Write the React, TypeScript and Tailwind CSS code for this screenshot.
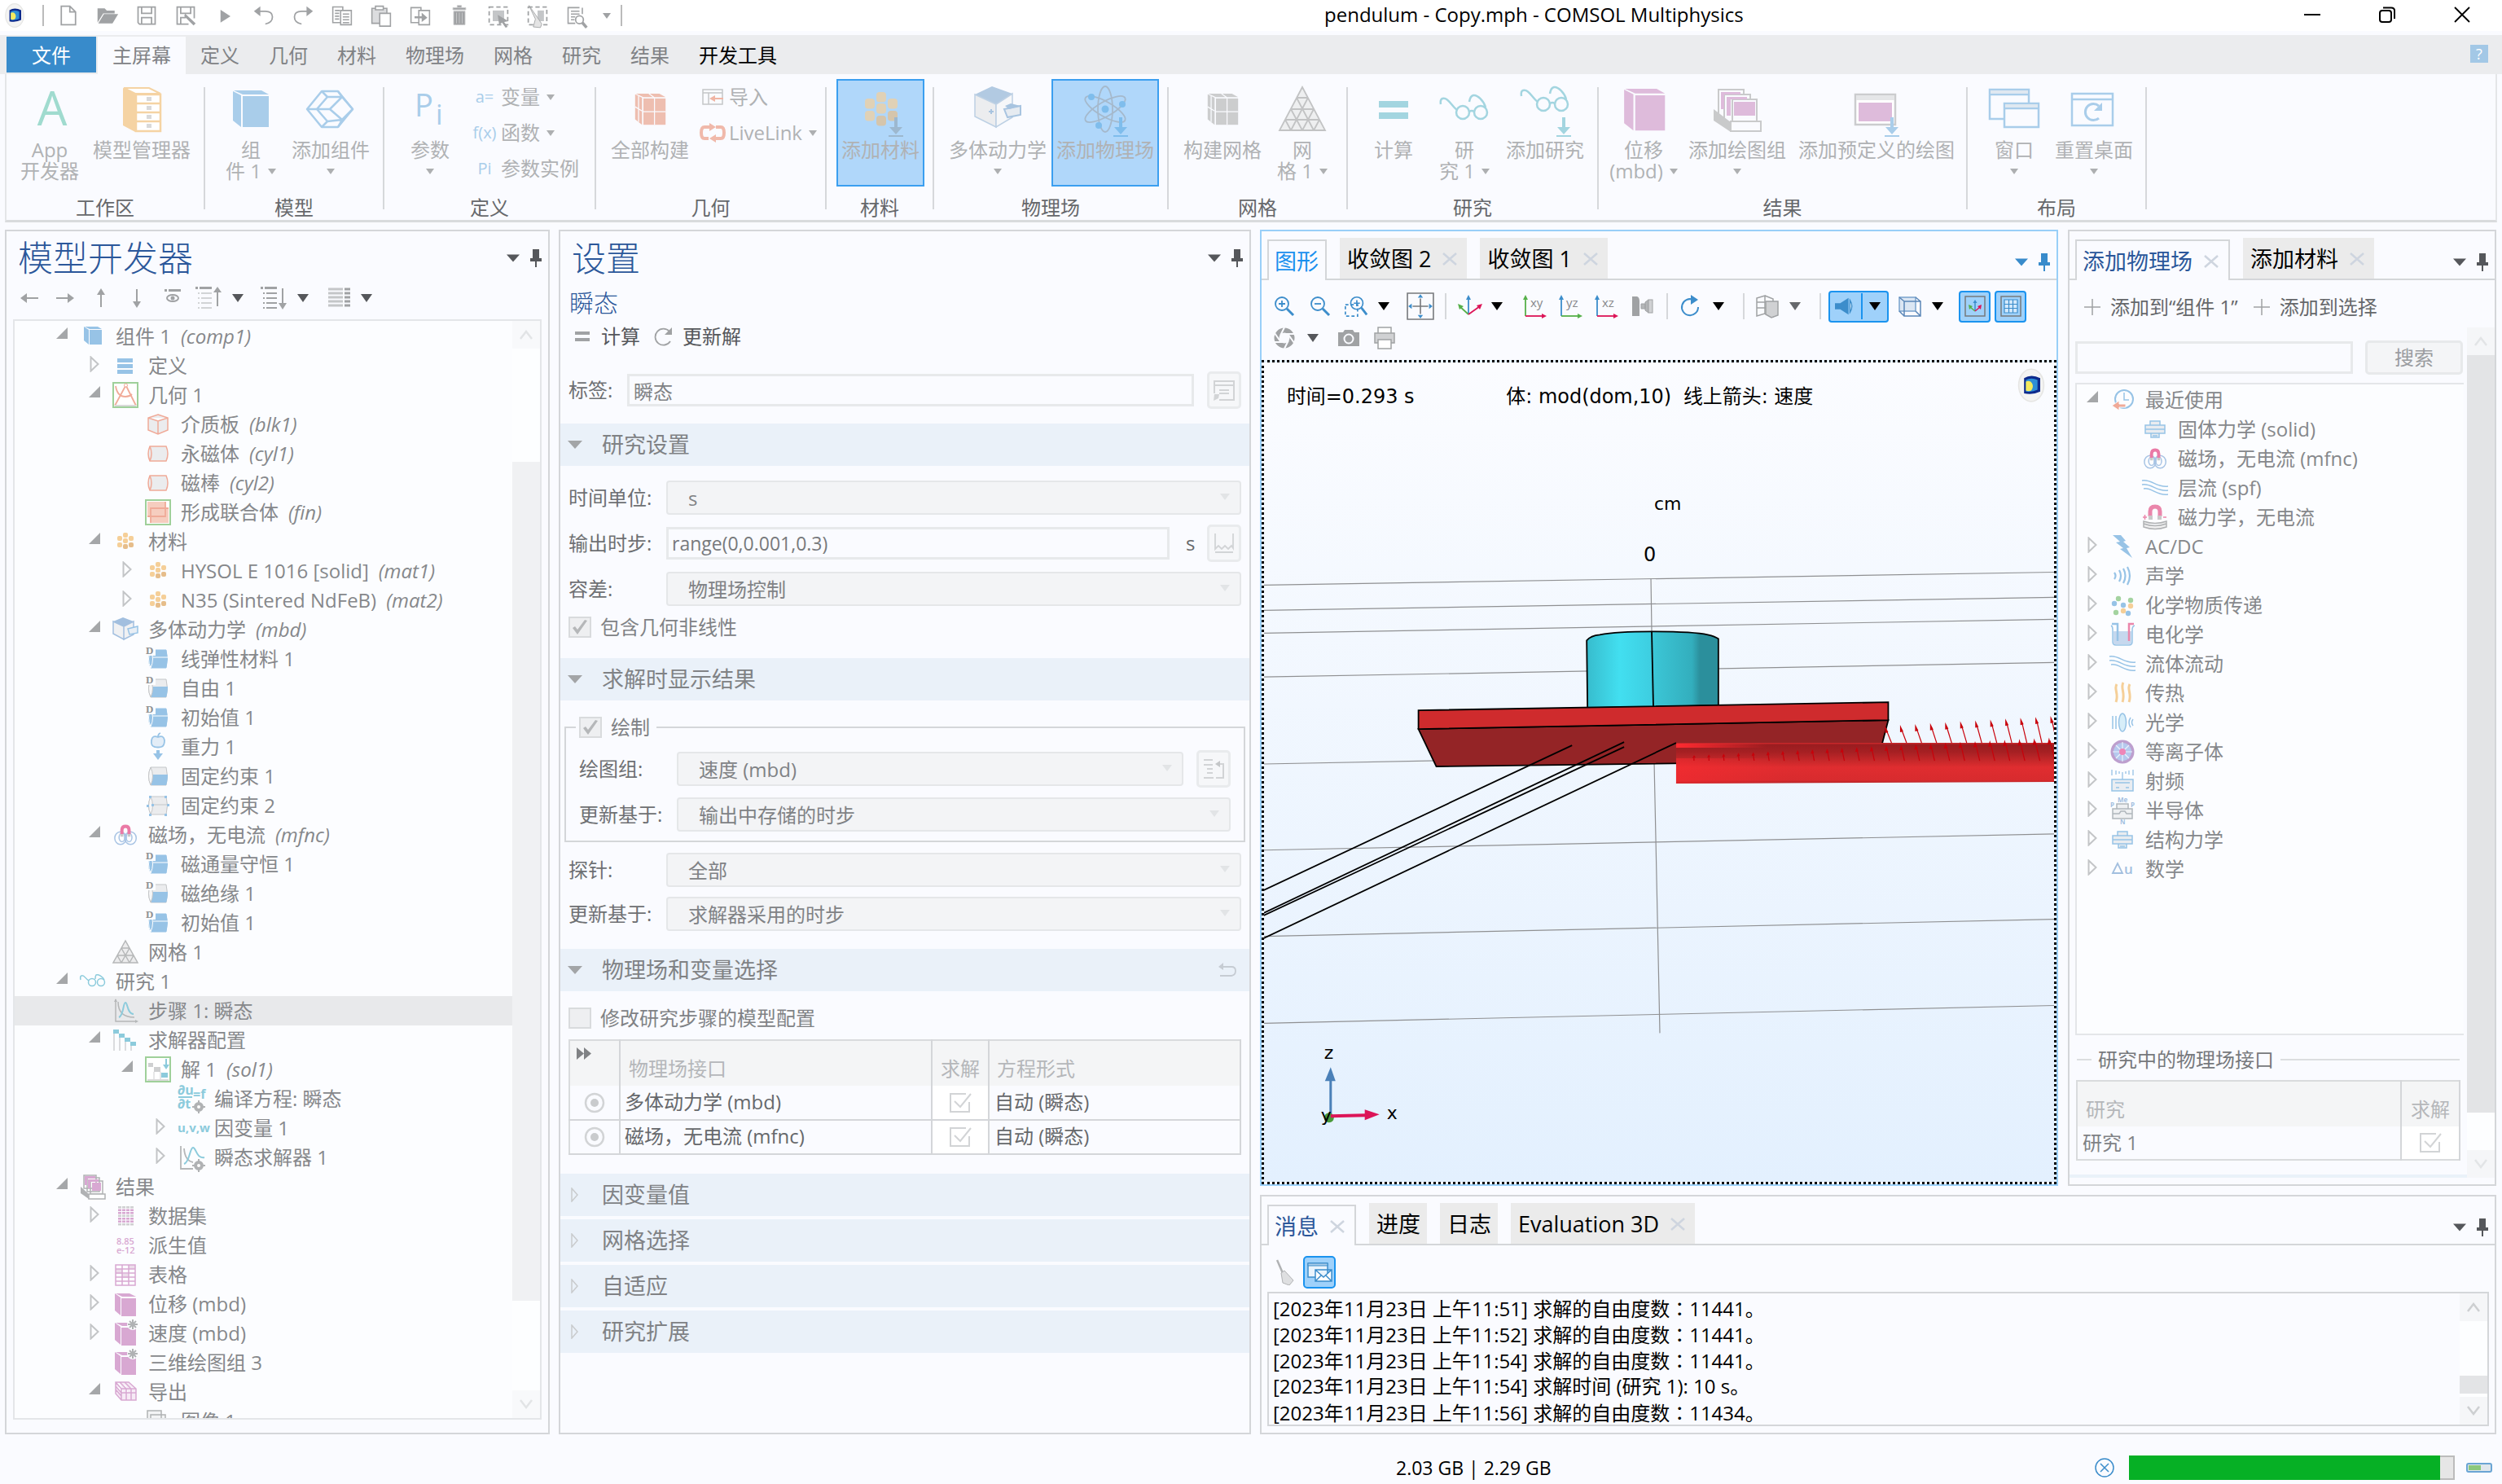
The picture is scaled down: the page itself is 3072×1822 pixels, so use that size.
import React from "react";

type Kids = { children?: React.ReactNode };

const B = "#97c3e6";
const G = "#a0a2a4";
const LG = "#c4c6c8";
const PINK = "#d8a8d2";
const CY = "#8ccbdc";
const OR = "#f5cf98";
const RD = "#f0aa98";

/* ---------- generic pieces ---------- */

function Svg({ s = "size-8", vb = "0 0 32 32", children }: Kids & { s?: string; vb?: string }) {
  return (
    <svg className={`${s} block shrink-0`} viewBox={vb} fill="none" aria-hidden="true">
      {children}
    </svg>
  );
}

function Caret({ color = "#000" }: { color?: string }) {
  return (
    <Svg s="w-[14px] h-[10px]" vb="0 0 14 10">
      <path d="M0 0H14L7 10Z" fill={color} />
    </Svg>
  );
}

function PanelTools({ color = "#55575b" }: { color?: string }) {
  return (
    <div className="flex items-center gap-[13px]">
      <button type="button" aria-label="菜单">
        <Svg s="w-[16px] h-[10px]" vb="0 0 16 10">
          <path d="M0 0.500H16L8 9.500Z" fill={color} />
        </Svg>
      </button>
      <button type="button" aria-label="固定">
        <Svg s="w-[14px] h-[22px]" vb="0 0 14 22">
          <path d="M3 0H11V11H14V15H8V22H6V15H0V11H3Z" fill={color} />
        </Svg>
      </button>
    </div>
  );
}

function CloseX() {
  return (
    <Svg s="size-[18px]" vb="0 0 18 18">
      <path d="M1 2L17 16M17 2L1 16" stroke="#ced5df" strokeWidth="2.500" />
    </Svg>
  );
}

function Tab({ label, active, close, color = "text-[#2b579a]" }: { label: string; active?: boolean; close?: boolean; color?: string }) {
  const base = "flex h-[50px] items-center gap-[14px] pt-[2px] text-[27px] leading-[48px] whitespace-nowrap";
  const look = active ? `relative -mb-[2px] border-2 border-b-0 border-[#d4d6d9] bg-[#fafbff] pl-[7px] ${color}` : "bg-[#ebebeb] pl-[9px] text-black";
  return (
    <div className={`${base} ${look} ${close ? "pr-3" : "pr-[8px]"}`}>
      <button type="button" role="tab" aria-selected={!!active} className="whitespace-nowrap">
        {label}
      </button>
      {close && (
        <button type="button" aria-label="关闭">
          <CloseX />
        </button>
      )}
    </div>
  );
}

function TabBar({ children, pin }: Kids & { pin?: string }) {
  return (
    <div className="flex h-[60px] shrink-0 items-end justify-between border-b-2 border-[#d4d6d9] pl-[7px] pr-2">
      <div role="tablist" className="flex items-end gap-4">{children}</div>
      <div className="flex h-10 items-center">
        <PanelTools color={pin} />
      </div>
    </div>
  );
}

function Panel({ children, border = "border-[#d4d6d9]" }: Kids & { border?: string }) {
  return <section className={`flex min-h-0 min-w-0 flex-col border-2 bg-[#fafbff] ${border}`}>{children}</section>;
}

function Chevron({ up, color = "#e2e4e6" }: { up?: boolean; color?: string }) {
  return (
    <Svg s="w-[16px] h-[12px]" vb="0 0 16 12">
      <path d={up ? "M1 11L8 2L15 11" : "M1 1L8 10L15 1"} stroke={color} strokeWidth="2.500" />
    </Svg>
  );
}

/* ---------- ribbon icons (60 × 60) ---------- */

function Block({ c, split }: { c: string; split?: boolean }) {
  return (
    <>
      <path d="M8 8L18 13V52L8 44Z" fill={c} />
      <path d="M9 7H43L52 12H20Z" fill={c} />
      <path d="M20 14H52V52H20Z" fill={c} />
      {split && <path d="M20 33H52M36 14V52M8 26L18 32M13 10V48M28 7L36 13" stroke="#fafbff" strokeWidth="1.500" />}
    </>
  );
}

function AddArrow({ c }: { c: string }) {
  return <path d="M47 40H51V52H57L49 61L41 52H47ZM40 62H58V64H40Z" fill={c} />;
}

function Glasses({ c }: { c: string }) {
  return (
    <g stroke={c} strokeWidth="2.500">
      <circle cx="28" cy="34" r="8" />
      <circle cx="50" cy="34" r="8" />
      <path d="M21 31C14 26 10 15 3 17Q0 18 1 24M36 33Q39 31 42 33M56 28C54 20 46 12 41 13Q37 14 36 21" />
    </g>
  );
}

const blobs: [number, number, string][] = [
  [11, 17, OR], [11, 32, OR], [25, 9, OR], [25, 23, OR], [25, 38, "#e6bd8a"], [39, 17, OR], [39, 32, "#e6bd8a"],
];

const ribbonIcon: Record<string, React.ReactNode> = {
  app: <text x="33" y="50" textAnchor="middle" fontSize="58" fill="#a0dbcf">A</text>,
  cabinet: (
    <>
      <path d="M7 4L22 11V58L7 50Z" fill="#f5d3a3" />
      <path d="M8 4H39L53 11H22Z" fill="#fff" stroke="#f5d3a3" strokeWidth="2" />
      <path d="M23 12H53V57H23ZM23 23H53M23 34H53M23 45H53" fill="#fff" stroke="#f5d3a3" strokeWidth="2.500" />
      <path d="M36 15H42V20H36ZM36 26H42V31H36ZM36 37H42V42H36ZM36 48H42V53H36Z" fill="#d9d9d9" />
    </>
  ),
  comp: <Block c="#a9cdea" />,
  addcomp: (
    <g stroke="#a9cdea" strokeWidth="2.500" strokeLinejoin="round">
      <path d="M1 30L19 8H39L57 30L39 52H19Z" />
      <path d="M19 8L26 15H44L57 30L44 43L26 45L19 52M26 15L13 30L26 45M1 30H13M44 15L29 30L44 43M39 8L44 15M13 30H29M39 52L44 43" />
    </g>
  ),
  params: (
    <g fill="#a9cdea">
      <text x="11" y="39" fontSize="38">P</text>
      <text x="37" y="49" fontSize="34">i</text>
    </g>
  ),
  build: <g transform="translate(5 5) scale(0.85)"><Block c="#eebeb0" split /></g>,
  material: (
    <>
      {blobs.map(([x, y, c], i) => (
        <rect key={i} x={x} y={y} width="12" height="12.500" rx="4" fill={c} opacity="0.7" />
      ))}
      <AddArrow c="#9db8cf" />
    </>
  ),
  mbd: (
    <>
      <path d="M2 12L23 2L48 11L28 24Z" fill="#b2cae2" />
      <path d="M2 12L28 24V52L2 39Z" fill="#ecedef" stroke="#bdd0e4" strokeWidth="1.500" />
      <path d="M28 24L48 11V40L28 52Z" fill="#f6f7f9" stroke="#bdd0e4" strokeWidth="1.500" />
      <path d="M38 30L58 26V37L42 40Z" fill="#e6ebf1" stroke="#a8c4e0" strokeWidth="2" />
      <path d="M39 26L46 23L58 26L44 30Z" fill="#a8c4e0" />
      <path d="M22 30V36M19 33H25" stroke="#a8c4e0" strokeWidth="2" />
    </>
  ),
  physics: (
    <>
      <g stroke="#a5b9cc" strokeWidth="1.800">
        <ellipse cx="30" cy="30" rx="9" ry="28" />
        <ellipse cx="30" cy="30" rx="9" ry="28" transform="rotate(60 30 30)" />
        <ellipse cx="30" cy="30" rx="9" ry="28" transform="rotate(-60 30 30)" />
      </g>
      <g fill="#7fbdec">
        <circle cx="30" cy="30" r="4.500" />
        <circle cx="13" cy="15" r="4" />
        <circle cx="51" cy="24" r="4" />
        <circle cx="22" cy="50" r="4" />
      </g>
      <AddArrow c="#7fbdec" />
    </>
  ),
  meshbuild: <g transform="translate(5 5) scale(0.85)"><Block c="#cccdce" split /></g>,
  mesh: (
    <path
      d="M30 3L2 56H58ZM23 16H37M16 30H44M9 43H51M37 16L16 56M44 30L30 56M51 43L44 56M23 16L44 56M16 30L30 56M9 43L16 56"
      stroke="#c2c3c4" strokeWidth="1.800" fill="#eeeff0"
    />
  ),
  compute: <path d="M12 20H48V28H12ZM12 34H48V42H12Z" fill="#a3d5e0" />,
  study: <Glasses c="#a3d5e0" />,
  addstudy: (
    <>
      <g transform="translate(0 -10)"><Glasses c="#a3d5e0" /></g>
      <path d="M51 40H55V52H61L53 61L45 52H51ZM44 62H62V64H44Z" fill="#a3d5e0" />
    </>
  ),
  disp: <g transform="translate(-3 -3) scale(1.14)"><Block c="#debbdb" /></g>,
  addplot: (
    <>
      <g stroke="#c9cacb" strokeWidth="2" fill="#fafbff">
        <path d="M7 6H38V40H7Z" /><path d="M14 12H46V46H14Z" /><path d="M24 18H54V48H24Z" />
      </g>
      <path d="M10 9H34V12H14V30H10Z" fill="#debbdb" />
      <path d="M17 15H42V18H22V38H17Z" fill="#debbdb" />
      <path d="M26 21H52V38H26Z" fill="#debbdb" />
      <path d="M1 30L22 46V58L1 44Z" fill="#c9cacb" />
      <path d="M22 45H59V57H22Z" fill="#fafbff" stroke="#c9cacb" strokeWidth="2" />
    </>
  ),
  predef: (
    <>
      <path d="M4 12H53V49H4Z" fill="#fff" stroke="#cbccce" strokeWidth="2.500" />
      <path d="M5 13H52V19H5Z" fill="#e5e6e8" />
      <path d="M8 22H49V45H8Z" fill="#debbdb" />
      <AddArrow c="#a9cdea" />
    </>
  ),
  windows: (
    <g stroke="#a9cdea" strokeWidth="2.500">
      <path d="M0 6H48V42H0Z" fill="#fafbff" /><path d="M0 12H48" /><path d="M1 7H47V11H1Z" fill="#dfe8f1" stroke="none" />
      <path d="M18 23H60V52H18Z" fill="#fafbff" /><path d="M18 29H60" /><path d="M19 24H59V28H19Z" fill="#dfe8f1" stroke="none" />
    </g>
  ),
  reset: (
    <g stroke="#a9cdea" strokeWidth="2.500">
      <path d="M3 11H53V50H3ZM3 18H53" />
      <path d="M36 41A10 10 0 1 1 36 26" strokeWidth="3" />
      <path d="M40 22V32H30Z" fill="#a9cdea" stroke="none" />
    </g>
  ),
};

type RB = { icon: string; l1: string; l2?: string; drop?: boolean; w: string; on?: boolean };

function RibbonButton({ icon, l1, l2, drop, w, on }: RB) {
  return (
    <button
      type="button"
      className={`flex h-[132px] shrink-0 flex-col items-center text-[24px] leading-[26px] whitespace-nowrap text-[#b0b2b4] ${w} ${
        on ? "bg-[#b0d7fa] shadow-[inset_0_0_0_2px_#3b9ff0]" : ""
      }`}
    >
      <span className="flex h-[74px] items-center">
        <Svg s="size-[60px] overflow-visible" vb="0 0 60 60">{ribbonIcon[icon]}</Svg>
      </span>
      <span>{l1}</span>
      <span className="flex h-[26px] items-center gap-2">
        {l2}
        {drop && (
          <Svg s="w-[10px] h-[7px]" vb="0 0 10 7"><path d="M0 0H10L5 7Z" fill="#adafb1" /></Svg>
        )}
      </span>
    </button>
  );
}

function SmallButton({ icon, label, drop }: { icon: React.ReactNode; label: string; drop?: boolean }) {
  return (
    <button type="button" className="flex h-[44px] items-center text-[24px] whitespace-nowrap text-[#b0b2b4]">
      <span className="mr-[5px] flex w-[30px] justify-center">{icon}</span>
      {label}
      {drop && (
        <span className="ml-2">
          <Svg s="w-[10px] h-[7px]" vb="0 0 10 7"><path d="M0 0H10L5 7Z" fill="#adafb1" /></Svg>
        </span>
      )}
    </button>
  );
}

function Group({ label, w, pad, children }: Kids & { label: string; w: string; pad: string }) {
  return (
    <div className={`flex shrink-0 ${w}`}>
      <div className="flex min-w-0 flex-1 flex-col">
        <div className={`flex h-[132px] items-start ${pad}`}>{children}</div>
        <div className="mt-[11px] text-center text-[24px] leading-[30px] text-[#66686b]">{label}</div>
      </div>
      <div className="mt-[10px] h-[150px] w-[2px] bg-[#d6d8db]" />
    </div>
  );
}

function TextIcon({ t }: { t: string }) {
  return <span className="text-[20px] text-[#a9cdea]">{t}</span>;
}

function Ribbon() {
  return (
    <div className="flex h-[182px] border-x-2 border-b-[3px] border-[#d9dbdd] border-l-[#e4e6e8] border-r-[#e4e6e8] bg-[#fafbff] pt-[6px] mx-[6px]">
      <Group label="工作区" w="w-[244px]" pad="">
        <RibbonButton icon="app" l1="App" l2="开发器" w="w-[106px]" />
        <RibbonButton icon="cabinet" l1="模型管理器" w="w-[120px]" />
      </Group>
      <Group label="模型" w="w-[220px]" pad="pl-[12px]">
        <RibbonButton icon="comp" l1="组" l2="件 1" drop w="w-[88px]" />
        <RibbonButton icon="addcomp" l1="添加组件" drop w="w-[108px]" />
      </Group>
      <Group label="定义" w="w-[260px]" pad="pl-[16px]">
        <RibbonButton icon="params" l1="参数" drop w="w-[80px]" />
        <div className="ml-3">
          <SmallButton icon={<TextIcon t="a=" />} label="变量" drop />
          <SmallButton icon={<TextIcon t="f(x)" />} label="函数" drop />
          <SmallButton icon={<TextIcon t="Pi" />} label="参数实例" />
        </div>
      </Group>
      <Group label="几何" w="w-[283px]" pad="pl-[16px]">
        <RibbonButton icon="build" l1="全部构建" w="w-[100px]" />
        <div className="ml-3">
          <SmallButton
            icon={
              <Svg s="size-[26px]" vb="0 0 26 26">
                <path d="M1 4H25V22H1ZM1 8H25M8 8V22" stroke={LG} strokeWidth="1.500" />
                <path d="M26 14H16V11L9 15L16 19V16H26Z" fill="#f0b5a4" />
              </Svg>
            }
            label="导入"
          />
          <SmallButton
            icon={
              <Svg s="w-[34px] h-[24px]" vb="0 0 34 24">
                <path d="M13 5H7Q3 5 3 12T7 19H12M21 5H27Q31 5 31 12T27 19H21" stroke="#f0b9aa" strokeWidth="4" />
                <path d="M13 0L21 5L13 10ZM21 14L13 19L21 24Z" fill="#f0b9aa" />
              </Svg>
            }
            label="LiveLink"
            drop
          />
        </div>
      </Group>
      <Group label="材料" w="w-[132px]" pad="pl-[12px]">
        <RibbonButton icon="material" l1="添加材料" on w="w-[108px]" />
      </Group>
      <Group label="物理场" w="w-[288px]" pad="pl-[18px] gap-[6px]">
        <RibbonButton icon="mbd" l1="多体动力学" drop w="w-[120px]" />
        <RibbonButton icon="physics" l1="添加物理场" on w="w-[132px]" />
      </Group>
      <Group label="网格" w="w-[220px]" pad="pl-[12px]">
        <RibbonButton icon="meshbuild" l1="构建网格" w="w-[108px]" />
        <RibbonButton icon="mesh" l1="网" l2="格 1" drop w="w-[88px]" />
      </Group>
      <Group label="研究" w="w-[308px]" pad="pl-[16px]">
        <RibbonButton icon="compute" l1="计算" w="w-[80px]" />
        <RibbonButton icon="study" l1="研" l2="究 1" drop w="w-[94px]" />
        <RibbonButton icon="addstudy" l1="添加研究" w="w-[104px]" />
      </Group>
      <Group label="结果" w="w-[453px]" pad="pl-[11px] gap-[5px]">
        <RibbonButton icon="disp" l1="位移" l2="(mbd)" drop w="w-[88px]" />
        <RibbonButton icon="addplot" l1="添加绘图组" drop w="w-[132px]" />
        <RibbonButton icon="predef" l1="添加预定义的绘图" w="w-[200px]" />
      </Group>
      <Group label="布局" w="w-[220px]" pad="pl-[17px]">
        <RibbonButton icon="windows" l1="窗口" drop w="w-[80px]" />
        <RibbonButton icon="reset" l1="重置桌面" drop w="w-[116px]" />
      </Group>
    </div>
  );
}

/* ---------- title bar ---------- */

function Logo({ s }: { s: string }) {
  return (
    <Svg s={s} vb="0 0 32 40">
      <ellipse cx="16" cy="20" rx="14" ry="18" fill="#f4f4f3" stroke="#e6e6e4" strokeWidth="1.500" />
      <path d="M8 12Q16 7 26 12V27Q18 31 8 29Z" fill="#0d2a8c" />
      <path d="M10 14Q16 11 23 14V25Q17 28 10 27Z" fill="#2f8fd6" />
      <path d="M10 16Q15 14 17 18T16 26Q13 27 10 26Z" fill="#f4ea5e" />
    </Svg>
  );
}

const quick: { n: string; d: React.ReactNode }[] = [
  { n: "新建", d: <path d="M6 3H18L26 11V29H6ZM18 3V11H26" stroke={G} strokeWidth="2" /> },
  { n: "打开", d: <path d="M2 6H12L15 9H26V13H10L2 26ZM11 14H31L23 27H3Z" fill={G} /> },
  { n: "保存", d: <path d="M4 4H28V28H6L4 26ZM9 4V13H23V4M9 28V19H23V28" stroke={G} strokeWidth="2" /> },
  { n: "另存为", d: <><path d="M28 20V4H4V28H20M9 4V13H23V4M9 28V19H16" stroke={G} strokeWidth="2" /><path d="M15 13L30 27L27 30L14 17Z" fill={G} /></> },
  { n: "运行", d: <path d="M10 8L24 17L10 26Z" fill={G} /> },
  { n: "撤消", d: <><path d="M5 10H18Q28 10 28 18T18 28" stroke={G} strokeWidth="2" /><path d="M11 3L2 10L11 17Z" fill={G} /></> },
  { n: "重做", d: <><path d="M27 10H14Q4 10 4 18T14 28" stroke={G} strokeWidth="2" /><path d="M21 3L30 10L21 17Z" fill={G} /></> },
  { n: "复制", d: <><path d="M14 26H3V4H17V9M6 9H13M6 13H12M6 17H12M6 21H12" stroke={G} strokeWidth="1.800" /><path d="M14 9H29V29H14ZM17 14H26M17 18H26M17 22H26M17 26H26" stroke={G} strokeWidth="1.800" /></> },
  { n: "粘贴", d: <><path d="M3 6H24V27H3Z" fill="#dcdddf" stroke={G} strokeWidth="1.800" /><path d="M8 3H19V8H8Z" fill="#fff" stroke={G} strokeWidth="1.800" /><path d="M14 13H29V31H14Z" fill="#fff" stroke={G} strokeWidth="1.800" /></> },
  { n: "复制并移动", d: <><path d="M14 26H3V5H17V9M14 9H29V29H14Z" stroke={G} strokeWidth="1.800" /><path d="M8 17H18V12L26 19L18 25V20H8Z" fill={G} /></> },
  { n: "删除", d: <path d="M7 5H25V8H7ZM13 2H19V5H13ZM8 10H24V29H8ZM12 12V27M16 12V27M20 12V27" fill={G} stroke="#c9cacb" strokeWidth="1" /> },
  { n: "选择", d: <><path d="M3 4H29V29H3Z" stroke={G} strokeWidth="2" strokeDasharray="6 4" /><path d="M8 9H24V24H8Z" fill={LG} /><path d="M15 15L30 24L24 25L29 32L26 33L21 26L17 29Z" fill={G} /></> },
  { n: "清除", d: <><path d="M3 4H29V29H3Z" stroke={G} strokeWidth="2" strokeDasharray="6 4" /><path d="M16 9H25V24H16Z" fill={LG} /><path d="M4 2L13 21L10 32L20 33L22 28L16 19Z" fill="#e4e4e4" stroke={G} strokeWidth="1" /></> },
  { n: "查找", d: <><path d="M20 5H4V27H14M8 10H20M8 14H20M8 18H14M8 22H13M24 5V14" stroke={G} strokeWidth="1.800" /><circle cx="20" cy="22" r="5.500" stroke={G} strokeWidth="2" /><path d="M24 26L30 33" stroke={G} strokeWidth="4" /></> },
];

function TitleBar() {
  return (
    <div className="grid h-[38px] shrink-0 grid-cols-[1626px_1fr_auto] items-center bg-white">
      <div className="flex items-center">
        <div className="flex w-[36px] justify-center"><Logo s="w-[26px] h-[32px]" /></div>
        <div className="ml-4 h-[26px] w-[2px] bg-[#bbb]" />
        <div className="ml-[6px] flex">
          {quick.map((q) => (
            <button key={q.n} type="button" aria-label={q.n} className="flex w-12 justify-center">
              <Svg s="size-[28px] overflow-visible">{q.d}</Svg>
            </button>
          ))}
        </div>
        <span className="ml-2"><Svg s="w-[10px] h-[7px]" vb="0 0 10 7"><path d="M0 0H10L5 7Z" fill={G} /></Svg></span>
        <div className="ml-3 h-[26px] w-[2px] bg-[#bbb]" />
      </div>
      <h1 className="pb-[2px] text-[24px] leading-[34px] whitespace-nowrap text-black">pendulum - Copy.mph - COMSOL Multiphysics</h1>
      <div className="flex pr-[3px] pb-[2px]">
        <button type="button" aria-label="最小化" className="flex h-9 w-[92px] items-center justify-center"><Svg s="size-5" vb="0 0 20 20"><path d="M0 10H20" stroke="#000" strokeWidth="2" /></Svg></button>
        <button type="button" aria-label="还原" className="flex h-9 w-[92px] items-center justify-center"><Svg s="size-5" vb="0 0 20 20"><rect x="1" y="5" width="14" height="14" rx="3" stroke="#000" strokeWidth="2" /><path d="M5 1.500H15Q19 1.500 19 5V15" stroke="#000" strokeWidth="2" /></Svg></button>
        <button type="button" aria-label="关闭" className="flex h-9 w-[92px] items-center justify-center"><Svg s="size-5" vb="0 0 20 20"><path d="M1 1L19 19M19 1L1 19" stroke="#000" strokeWidth="1.800" /></Svg></button>
      </div>
    </div>
  );
}

function Menu() {
  const items = ["定义", "几何", "材料", "物理场", "网格", "研究", "结果"];
  return (
    <nav className="mt-[5px] flex h-[48px] shrink-0 items-end justify-between bg-[#ebecee] px-[6px] text-[24px] leading-[46px] text-[#808285]">
      <div className="flex">
        <button type="button" className="mb-[2px] ml-[2px] h-[44px] w-[110px] bg-[#388bcb] leading-[46px] text-white">文件</button>
        <button type="button" className="ml-[2px] h-[46px] bg-[#fafbff] px-[18px]">主屏幕</button>
        {items.map((t) => (
          <button key={t} type="button" className="px-[18px]">{t}</button>
        ))}
        <button type="button" className="px-[18px] text-black">开发工具</button>
      </div>
      <button type="button" aria-label="帮助" className="mr-[11px] mb-[14px] size-[22px] bg-[#a3c8e6] text-[18px] leading-[22px] text-white">?</button>
    </nav>
  );
}

/* ---------- tree icons (32 × 32) ---------- */

function Cyl({ mode, d }: { mode: "full" | "half" | "edge"; d?: boolean }) {
  return (
    <>
      <path d="M7 5H26Q29 16 26 27H7Q2 16 7 5Z" fill={mode === "full" ? B : "#ebecee"} stroke={mode === "full" ? B : LG} strokeWidth="1" />
      {mode === "half" && <path d="M7 14H28Q28 22 26 27H7Q10 20 7 14Z" fill={B} />}
      <path d="M7 5Q12 16 7 27Q2 16 7 5Z" fill={mode === "full" ? B : "#f6f6f7"} stroke={mode === "full" ? "#fff" : LG} strokeWidth="1" />
      {mode === "full" && <path d="M10 14H28" stroke="#fff" />}
      {mode === "edge" && (
        <>
          <path d="M8 15H28" stroke={LG} />
          <path d="M5 4h3v3h-3zM24 4h3v3h-3zM2 15h3v3h-3zM8 14h3v3h-3zM27 14h3v3h-3zM5 26h3v3h-3zM24 26h3v3h-3z" fill={B} />
        </>
      )}
      {d && (
        <>
          <path d="M0 0H13V12H0Z" fill="#fcfdff" />
          <text x="1" y="10" fontSize="13" fontWeight="700" fill="#8f9193" className="font-['Liberation_Serif',serif]">D</text>
        </>
      )}
    </>
  );
}

function PinkCube() {
  return <path d="M3 3L10 8V30L3 24ZM4 3H21L29 7H12ZM11 9H29V31H11Z" fill={PINK} />;
}

function Star() {
  return <><circle cx="25" cy="5" r="7" fill="#fcfdff" /><path d="M25 -1V11M19 5H31M21 1L29 9M29 1L21 9" stroke="#b0b2b4" strokeWidth="2" /></>;
}

function Gear() {
  return <><circle cx="25" cy="26" r="4" stroke="#b0b2b4" strokeWidth="4" fill="#fff" /><path d="M25 18V23M25 29V34M17 26H22M28 26H33" stroke="#b0b2b4" strokeWidth="2" /></>;
}

const Flow = <path d="M0 7C12 5 18 16 32 14M0 12C12 10 18 21 32 19M2 17C12 15 18 26 32 24" stroke={B} strokeWidth="1.500" />;
const Magnet = (
  <g transform="translate(2 2) scale(0.88 0.86)">
    <g stroke="#a8c4e4" strokeWidth="1.700"><ellipse cx="9" cy="21" rx="8" ry="9" /><ellipse cx="23" cy="21" rx="8" ry="9" /><ellipse cx="11" cy="20" rx="4" ry="6" /><ellipse cx="21" cy="20" rx="4" ry="6" /></g>
    <path d="M11 15V10Q11 4 16 4T21 10V15" stroke="#ea7aa6" strokeWidth="4.500" />
    <path d="M9 15H13V19H9ZM19 15H23V19H19Z" fill="#c9c9c9" />
  </g>
);
const Solid = <path d="M10 6H22V11H28V21H21V26H11V21H4V11H10ZM10 11H22M4 16H28M11 21H21M13 24H19" fill="#e9ecf0" stroke={B} strokeWidth="1.500" />;
const Plots = (
  <>
    <path d="M5 2H20V18H5ZM9 5H24V22H9ZM13 9H28V25H13Z" fill="#fff" stroke="#b0b2b4" strokeWidth="1.500" />
    <path d="M6 3H19V6H9V14H6ZM10 7H23V10H13V18H10ZM15 11H26V21H15Z" fill={PINK} />
    <path d="M1 16L11 25V31L1 24Z" fill="#b0b2b4" />
    <path d="M11 25H31V31H11Z" fill="#fff" stroke="#b0b2b4" strokeWidth="1.500" />
  </>
);

const treeIcon: Record<string, React.ReactNode> = {
  comp: <path d="M5 4L11 8V26L5 21ZM6 4H22L27 7H12ZM12 8H27V26H12Z" fill={B} />,
  defs: <path d="M6 7H25V12H6ZM6 14H25V19H6ZM6 21H25V26H6Z" fill={B} />,
  geom: (
    <>
      <rect x="1" y="1" width="30" height="30" fill="#fff" stroke="#9fd09a" strokeWidth="2" />
      <path d="M16 5L3 29M17 5L29 29M4 5Q6 18 16 18Q21 18 24 15" stroke={RD} strokeWidth="1.800" />
      <circle cx="16.500" cy="4" r="2" fill="#fff" stroke={RD} />
      <path d="M3 28H29V30H3Z" fill="#dadada" />
    </>
  ),
  block: <path d="M16 4L28 8V23L16 28L4 23V8ZM4 8L16 12L28 8M16 12V28" fill="#ebecee" stroke={RD} strokeWidth="1.500" />,
  cyl: <path d="M6 7H26Q30 16 26 25H6Q2 16 6 7ZM6 7Q10 16 6 25" fill="#ebecee" stroke={RD} strokeWidth="1.500" />,
  union: (
    <>
      <rect x="1" y="1" width="30" height="30" fill="#fff" stroke="#9fd09a" strokeWidth="2" />
      <path d="M3 3H25V21H3Z" fill="#f6cdbf" /><path d="M7 11H29V29H7Z" fill="#f6cdbf" />
      <path d="M25 3V21H3M7 29V11H29" stroke={RD} strokeWidth="1.800" />
    </>
  ),
  mat: (
    <>
      {[[6, 9], [6, 17], [13, 5], [13, 12], [20, 9]].map(([x, y], i) => <rect key={i} x={x} y={y} width="6" height="6" rx="2" fill={OR} />)}
      {[[13, 19], [20, 17]].map(([x, y], i) => <rect key={i} x={x} y={y} width="6" height="6" rx="2" fill="#e6bd8a" />)}
    </>
  ),
  mbd: (
    <>
      <path d="M1 6L13 1L26 6L14 12Z" fill="#a2bfdf" />
      <path d="M1 6L14 12V28L1 21ZM14 12L26 6V22L14 28Z" fill="#f0f1f3" stroke="#a2bfdf" strokeWidth="1.500" />
      <path d="M19 15L31 12V20L21 22Z" fill="#e8eef5" stroke={B} strokeWidth="1.500" />
    </>
  ),
  dfull: <Cyl mode="full" d />,
  dhalf: <Cyl mode="half" d />,
  half: <Cyl mode="half" />,
  edge: <Cyl mode="edge" />,
  gravity: (
    <>
      <path d="M16 4Q9 1 8 8T12 16Q16 17 20 16T24 8Q23 1 16 4ZM16 4Q16 0 19 -1" fill="#e3edf7" stroke={B} strokeWidth="1.800" />
      <path d="M14 20H18V24H22L16 32L10 24H14Z" fill={B} />
    </>
  ),
  mag: Magnet,
  mesh: <path d="M16 2L1 29H31ZM11 11H21M6 20H26M21 11L11 29M26 20L21 29M11 11L21 29M6 20L11 29" fill="#ececed" stroke="#b5b7b8" strokeWidth="1.500" />,
  study: (
    <g stroke={CY} strokeWidth="1.500"><circle cx="15" cy="17" r="4.500" /><circle cx="26" cy="17" r="4.500" /><path d="M11 15C7 13 5 7 2 9Q0 10 1 14M30 14C28 10 23 7 20 8Q19 9 19 13" /></g>
  ),
  step: (
    <>
      <path d="M4 2V29H29M7 5Q7 24 27 24" stroke="#b5b7b8" strokeWidth="1.500" />
      <path d="M2 5L4 1L6 5ZM28 27L32 29L28 31Z" fill="#b5b7b8" />
      <path d="M8 24C14 22 13 6 16 6S18 20 26 20" stroke={CY} strokeWidth="2" />
    </>
  ),
  solver: <><path d="M2 4V29M9 10V29M16 16V29M23 22V29" stroke="#c4c6c8" strokeWidth="1.200" /><path d="M1 3h7v5h-7zM8 8h7v5h-7zM15 13h7v5h-7zM22 18h7v5h-7z" fill={CY} /></>,
  sol: (
    <>
      <rect x="1" y="1" width="30" height="30" fill="#fff" stroke="#9fd09a" strokeWidth="2" />
      <path d="M4 8H10V13H4ZM11 13H19V19H11Z" fill="#cfd0d1" /><path d="M20 20H28V26H20Z" fill={CY} />
      <path d="M25 3H27V10H30L26 16L22 10H25Z" fill={CY} /><path d="M11 19V28M19 19V28" stroke="#cfd0d1" />
      <path d="M3 28H29V30H3Z" fill="#dadada" />
    </>
  ),
  eq: (
    <>
      <g fill={CY} fontSize="16" fontWeight="700"><text x="-1" y="11">∂u</text><text x="-1" y="28">∂t</text><text x="18" y="16" fontSize="16">=f</text></g>
      <path d="M0 14H17" stroke={CY} strokeWidth="2" /><Gear />
    </>
  ),
  uvw: <text x="-1" y="21" fontSize="15" fontWeight="700" fill={CY}>u,v,w</text>,
  tsolver: (
    <>
      <path d="M3 2V30H18M7 5Q8 20 18 22" stroke="#b5b7b8" strokeWidth="1.800" />
      <path d="M7 24C14 22 14 4 18 4S22 18 32 16" stroke={CY} strokeWidth="2" /><Gear />
    </>
  ),
  plots: Plots,
  data: (
    <>
      {[0, 1, 2, 3].map((c) =>
        [0, 1, 2, 3, 4, 5, 6].map((r) => (
          <rect key={`${c}-${r}`} x={7 + c * 5} y={4 + r * 3.500} width="4" height="2.500" fill={(c * 3 + r * 2) % 3 === 0 ? "#cfd0d1" : PINK} />
        ))
      )}
    </>
  ),
  derived: <g fill={PINK} fontSize="11" fontWeight="600"><text x="5" y="15">8.85</text><text x="5" y="26">e-12</text></g>,
  table: <><path d="M4 9H12V15H4ZM20 4H28V9H20ZM12 15H20V20H12Z" fill="#ecdcea" /><path d="M4 4H28V29H4ZM4 9H28M4 14H28M4 19H28M4 24H28M12 4V29M20 4V29" stroke={PINK} strokeWidth="1.500" /></>,
  cube: <PinkCube />,
  cubestar: <><PinkCube /><Star /></>,
  exp: <path d="M4 4H20L29 12V26H11L4 18ZM4 4L11 12H29M11 12V26M4 9L11 17H29M4 13L11 21M9 4L17 12V26M15 4L23 12V26" fill="#f6eaf5" stroke={PINK} strokeWidth="1.500" />,
  image: <path d="M3 3H20V20H3ZM7 8H25V26H7ZM12 13H31V30H12Z" fill="#f3f4f5" stroke="#b0b2b4" strokeWidth="1.500" />,
  recent: <><circle cx="18" cy="15" r="11" stroke={B} strokeWidth="2" /><path d="M18 7V16H24" stroke={B} strokeWidth="1.500" /><path d="M20 25H12V29L3 23L12 17V21H20Z" fill={RD} stroke="#fcfdff" strokeWidth="1" /></>,
  solid: Solid,
  flow: Flow,
  magmech: (
    <>
      <path d="M10 15V9Q10 3 16 3T22 9V15" stroke="#ea86ab" strokeWidth="5" />
      <path d="M8 14H13V19H8ZM19 14H24V19H19Z" fill="#c9c9c9" />
      <path d="M2 21Q16 26 30 21V28Q16 33 2 28ZM2 24Q16 29 30 24" fill="#f0f0f0" stroke="#b0b2b4" strokeWidth="1.500" />
      <path d="M1 16H6M3.500 13V19M26 16H30" stroke="#ea86ab" strokeWidth="1.500" />
    </>
  ),
  acdc: <path d="M4 2H14L20 9L17 10L25 17L21 18L28 30L13 19L17 18L8 11L13 10Z" fill={B} />,
  acoustic: <path d="M6 12Q9 16 6 20M12 9Q16 16 12 23M17 7Q22 16 17 25M22 5Q28 16 22 27" stroke={B} strokeWidth="2.200" />,
  chem: (
    <>
      <g fill={B}><circle cx="6" cy="14" r="3.200" /><circle cx="17" cy="16" r="3.200" /><circle cx="23" cy="26" r="3.200" /></g>
      <g fill="#a4d3a0"><circle cx="11" cy="8" r="3.200" /><circle cx="26" cy="10" r="3.200" /><circle cx="8" cy="25" r="3.200" /></g>
      <g fill={OR}><circle cx="26" cy="17" r="3.200" /><circle cx="17" cy="23" r="3.200" /></g>
    </>
  ),
  electro: (
    <>
      <path d="M5 12H27V26Q27 28 24 28H8Q5 28 5 26Z" fill="#c6d8ee" /><path d="M2 5Q4 6 4 10V25Q4 29 8 29H24Q28 29 28 25V10Q28 6 31 5" stroke={B} strokeWidth="1.500" />
      <path d="M3 3H10V24" stroke={B} strokeWidth="2.500" /><path d="M30 3H24V24" stroke="#ea86ab" strokeWidth="2.500" />
    </>
  ),
  heat: <path d="M9 5C5 12 12 16 8 27M17 3C13 10 20 15 16 27M25 5C21 12 28 16 24 27" stroke={OR} strokeWidth="3" />,
  optics: <><path d="M4 8V24M8 8V24" stroke={B} strokeWidth="1.500" /><ellipse cx="16" cy="16" rx="4.500" ry="11" fill="#d7eef9" stroke={B} strokeWidth="1.500" /><path d="M26 10Q22 16 26 22M29 12Q26 16 29 20" stroke={B} strokeWidth="1.500" /></>,
  plasma: (
    <>
      <circle cx="16" cy="16" r="14.500" fill="#bd9fce" />
      <circle cx="16" cy="16" r="11" fill="#b6c9ee" />
      <path d="M16 4V28M4 16H28M8 8L24 24M24 8L8 24" stroke="#e9f2fc" strokeWidth="1.200" />
      <circle cx="16" cy="16" r="4" fill="#ee86b8" />
    </>
  ),
  rf: <><path d="M3 14H29V28H3ZM7 18H25M8 24H12M20 24H24" stroke={B} strokeWidth="1.500" fill="#e9edf2" /><path d="M3 2V9M8 3V8M12 4V7M16 5V14M20 4V7M24 3V8M29 2V9" stroke={B} strokeWidth="1.300" /></>,
  semi: <><path d="M9 8H23V14H28V26H4V14H9ZM4 20H12L14 17H19L21 20H28M9 14H23" fill="#eef0f2" stroke="#b0b6bc" strokeWidth="1.500" /><g fill="#a2bfdf" fontSize="8" fontWeight="700"><text x="10" y="6">Me</text><text x="1" y="12">P</text><text x="26" y="12">P</text><text x="13" y="33">N</text></g></>,
  math: <><path d="M4 21L10 9L16 21Z" stroke="#a2bfdf" strokeWidth="1.800" /><text x="18" y="22" fontSize="17" fontWeight="600" fill="#a2bfdf">u</text></>,
};

type Row = { l: number; a?: "o" | "c"; i: string; t: string; it?: string; sel?: boolean };

const indent = ["pl-[38px]", "pl-[78px]", "pl-[118px]", "pl-[159px]"];
const indentPhysics = ["", "pl-10"];

function TreeRow({ r, pads, aw = "w-10" }: { r: Row; pads: string[]; aw?: string }) {
  return (
    <li className={`flex h-9 shrink-0 items-center whitespace-nowrap text-[24px] leading-9 text-[#86888b] ${pads[r.l]} ${r.sel ? "bg-[#e8e9eb]" : ""}`}>
      <span className={`flex shrink-0 justify-center ${aw}`}>
        {r.a === "o" && <Svg s="w-[14px] h-[14px] -mt-2" vb="0 0 14 14"><path d="M14 0V14H0Z" fill="#a5a7a9" /></Svg>}
        {r.a === "c" && <Svg s="w-[12px] h-[20px] -mt-1" vb="0 0 12 20"><path d="M1.500 1.500L10.500 10L1.500 18.500Z" stroke="#c3c5c7" strokeWidth="2" /></Svg>}
      </span>
      <Svg s="size-8 ml-[2px] overflow-visible">{treeIcon[r.i]}</Svg>
      <span className="ml-3">{r.t}</span>
      {r.it && <i className="ml-3">{r.it}</i>}
    </li>
  );
}

const modelRows: Row[] = [
  { l: 0, a: "o", i: "comp", t: "组件 1", it: "(comp1)" },
  { l: 1, a: "c", i: "defs", t: "定义" },
  { l: 1, a: "o", i: "geom", t: "几何 1" },
  { l: 2, i: "block", t: "介质板", it: "(blk1)" },
  { l: 2, i: "cyl", t: "永磁体", it: "(cyl1)" },
  { l: 2, i: "cyl", t: "磁棒", it: "(cyl2)" },
  { l: 2, i: "union", t: "形成联合体", it: "(fin)" },
  { l: 1, a: "o", i: "mat", t: "材料" },
  { l: 2, a: "c", i: "mat", t: "HYSOL E 1016 [solid]", it: "(mat1)" },
  { l: 2, a: "c", i: "mat", t: "N35 (Sintered NdFeB)", it: "(mat2)" },
  { l: 1, a: "o", i: "mbd", t: "多体动力学", it: "(mbd)" },
  { l: 2, i: "dfull", t: "线弹性材料 1" },
  { l: 2, i: "dhalf", t: "自由 1" },
  { l: 2, i: "dfull", t: "初始值 1" },
  { l: 2, i: "gravity", t: "重力 1" },
  { l: 2, i: "half", t: "固定约束 1" },
  { l: 2, i: "edge", t: "固定约束 2" },
  { l: 1, a: "o", i: "mag", t: "磁场，无电流", it: "(mfnc)" },
  { l: 2, i: "dfull", t: "磁通量守恒 1" },
  { l: 2, i: "dhalf", t: "磁绝缘 1" },
  { l: 2, i: "dfull", t: "初始值 1" },
  { l: 1, i: "mesh", t: "网格 1" },
  { l: 0, a: "o", i: "study", t: "研究 1" },
  { l: 1, i: "step", t: "步骤 1: 瞬态", sel: true },
  { l: 1, a: "o", i: "solver", t: "求解器配置" },
  { l: 2, a: "o", i: "sol", t: "解 1", it: "(sol1)" },
  { l: 3, i: "eq", t: "编译方程: 瞬态" },
  { l: 3, a: "c", i: "uvw", t: "因变量 1" },
  { l: 3, a: "c", i: "tsolver", t: "瞬态求解器 1" },
  { l: 0, a: "o", i: "plots", t: "结果" },
  { l: 1, a: "c", i: "data", t: "数据集" },
  { l: 1, i: "derived", t: "派生值" },
  { l: 1, a: "c", i: "table", t: "表格" },
  { l: 1, a: "c", i: "cube", t: "位移 (mbd)" },
  { l: 1, a: "c", i: "cubestar", t: "速度 (mbd)" },
  { l: 1, i: "cubestar", t: "三维绘图组 3" },
  { l: 1, a: "o", i: "exp", t: "导出" },
  { l: 2, i: "image", t: "图像 1" },
];

function ToolCell({ n, children, w = "w-11" }: Kids & { n: string; w?: string }) {
  return <button type="button" aria-label={n} className={`flex h-8 shrink-0 items-center justify-center ${w}`}>{children}</button>;
}

function ListIcon({ up }: { up: boolean }) {
  return (
    <Svg s="w-8 h-8">
      <path d="M0 2H3V5H0ZM5 2H20V5H5Z" fill={G} />
      <path d="M3 10H5M3 16H5M3 22H5M3 28H5M7 10H20M7 16H20M7 22H20M7 28H20" stroke={up ? "#d2d4d6" : G} strokeWidth="2" />
      <path d="M27 4V26" stroke={G} strokeWidth="2" />
      <path d={up ? "M22 9L27 2L32 9Z" : "M22 22L27 30L32 22Z"} fill={G} />
    </Svg>
  );
}

function ModelPanel() {
  return (
    <Panel>
      <div className="flex h-[66px] shrink-0 items-center justify-between pl-[14px] pr-2">
        <h2 className="text-[43px] leading-[60px] font-light text-[#2b579a]">模型开发器</h2>
        <PanelTools />
      </div>
      <div className="flex h-8 shrink-0 items-center pl-[6px]">
        <ToolCell n="后退"><Svg s="size-6" vb="0 0 24 24"><path d="M23 12H5" stroke={G} strokeWidth="2" /><path d="M9 6L1 12L9 18Z" fill={G} /></Svg></ToolCell>
        <ToolCell n="前进"><Svg s="size-6" vb="0 0 24 24"><path d="M1 12H19" stroke={G} strokeWidth="2" /><path d="M15 6L23 12L15 18Z" fill={G} /></Svg></ToolCell>
        <ToolCell n="上移"><Svg s="size-6" vb="0 0 24 24"><path d="M12 23V5" stroke={G} strokeWidth="2" /><path d="M7 8L12 0L17 8Z" fill={G} /></Svg></ToolCell>
        <ToolCell n="下移"><Svg s="size-6" vb="0 0 24 24"><path d="M12 1V19" stroke={G} strokeWidth="2" /><path d="M7 16L12 24L17 16Z" fill={G} /></Svg></ToolCell>
        <ToolCell n="显示"><Svg s="size-8"><path d="M6 5H9V8H6ZM11 5H26V8H11Z" fill={G} /><ellipse cx="16" cy="16" rx="7" ry="4" stroke={G} strokeWidth="2" /><circle cx="16" cy="16" r="2.500" fill={G} /></Svg></ToolCell>
        <ToolCell n="折叠"><ListIcon up /></ToolCell>
        <ToolCell n="折叠选项" w="w-7"><Caret color="#55575b" /></ToolCell>
        <ToolCell n="展开" w="ml-2 w-11"><ListIcon up={false} /></ToolCell>
        <ToolCell n="展开选项" w="w-7"><Caret color="#55575b" /></ToolCell>
        <ToolCell n="模型树节点文本" w="ml-2 w-11">
          <Svg s="w-[28px] h-[26px]" vb="0 0 28 26"><path d="M1 2H19M1 7H19M1 12H19M1 17H19M1 22H19" stroke="#c4c6c8" strokeWidth="3" /><path d="M21 2H28M21 7H28M21 12H28M21 17H28M21 22H28" stroke={G} strokeWidth="3" /></Svg>
        </ToolCell>
        <ToolCell n="文本选项" w="w-6"><Caret color="#55575b" /></ToolCell>
      </div>
      <div className="mx-2 mt-[10px] mb-4 flex min-h-0 flex-1 overflow-hidden border-2 border-[#e4e6e9] bg-[#fcfdff]">
        <ul className="flex min-w-0 flex-1 flex-col overflow-hidden pt-px">
          {modelRows.map((r, i) => <TreeRow key={i} r={r} pads={indent} />)}
        </ul>
        <div className="flex w-[34px] shrink-0 flex-col bg-[#fdfeff]">
          <div className="flex h-[34px] items-center justify-center bg-[#f8f9fb]"><Chevron up /></div>
          <div className="mt-[139px] min-h-0 flex-1 bg-[#f0f1f3]" />
          <div className="mt-[110px] flex h-[34px] items-center justify-center bg-[#f8f9fb]"><Chevron /></div>
        </div>
      </div>
    </Panel>
  );
}

/* ---------- settings ---------- */

function SectionHead({ t, closed, cls = "", children }: Kids & { t: string; closed?: boolean; cls?: string }) {
  return (
    <div className={`flex h-[52px] shrink-0 items-center justify-between bg-[#eaf1f9] pr-4 ${cls}`}>
      <button type="button" aria-expanded={!closed} className="flex items-center text-[27px] leading-[52px] text-[#808285]">
        <span className="flex w-[36px] justify-center">
          {closed
            ? <Svg s="w-[10px] h-[18px]" vb="0 0 10 18"><path d="M1 1L8 9L1 17Z" stroke="#c9cbcd" strokeWidth="1.500" /></Svg>
            : <Svg s="w-[18px] h-[10px]" vb="0 0 18 10"><path d="M0 0H18L9 10Z" fill="#a3a5a7" /></Svg>}
        </span>
        <span className="ml-[15px]">{t}</span>
      </button>
      {children}
    </div>
  );
}

function Combo({ id, value }: { id: string; value: string }) {
  return (
    <div className="relative h-[42px] min-w-0 flex-1">
      <select id={id} defaultValue={value} className="h-full w-full appearance-none rounded-[4px] border-2 border-[#e5e7e9] bg-[#f3f4f6] pt-px pl-[25px] text-[24px] leading-[36px] text-[#808285]">
        <option>{value}</option>
      </select>
      <span className="pointer-events-none absolute top-4 right-[14px]">
        <Svg s="w-[12px] h-[8px]" vb="0 0 12 8"><path d="M0 0H12L6 8Z" fill="#e2e4e6" /></Svg>
      </span>
    </div>
  );
}

function FieldRow({ label, id, children, lw = "w-[120px]", h = "h-[42px]" }: Kids & { label: string; id: string; lw?: string; h?: string }) {
  return (
    <div className={`flex shrink-0 items-center ${h}`}>
      <label htmlFor={id} className={`shrink-0 whitespace-nowrap text-[24px] text-[#6e7073] ${lw}`}>{label}</label>
      {children}
    </div>
  );
}

function SideButton({ n, children }: Kids & { n: string }) {
  return <button type="button" aria-label={n} className="ml-4 flex h-[46px] w-[42px] shrink-0 items-center justify-center rounded-[5px] border-[3px] border-[#e9ebed] bg-[#f6f7f9]">{children}</button>;
}

function Check({ label, on }: { label: string; on?: boolean }) {
  return (
    <label className="flex h-7 items-center text-[24px] leading-7 text-[#808285]">
      <span className="relative mr-[11px] h-[26px] w-7">
        <input type="checkbox" defaultChecked={on} className="block h-full w-full appearance-none border-2 border-[#d9dbdd] bg-[#eeeff1]" />
        {on && (
          <span className="pointer-events-none absolute top-[3px] left-[4px]">
            <Svg s="size-5" vb="0 0 20 20"><path d="M1 11L7 19L19 2L16 1L7 13L4 9Z" fill="#b5b7b9" /></Svg>
          </span>
        )}
      </span>
      {label}
    </label>
  );
}

function CellCheck({ n }: { n: string }) {
  return (
    <span className="relative mx-auto block h-7 w-[30px]">
      <input type="checkbox" defaultChecked aria-label={n} className="absolute inset-0 size-full appearance-none" />
      <span className="pointer-events-none absolute inset-0">
        <Svg s="w-[30px] h-7" vb="0 0 30 28"><path d="M22 3H3V25H26V13" stroke="#d2d4d6" strokeWidth="2" /><path d="M8 12L15 19L28 3" stroke="#d2d4d6" strokeWidth="2" /></Svg>
      </span>
    </span>
  );
}

function SettingsPanel() {
  return (
    <Panel>
      <div className="flex h-[66px] shrink-0 items-center justify-between pl-[14px] pr-2">
        <h2 className="text-[42px] leading-[60px] font-light text-[#2b579a]">设置</h2>
        <PanelTools />
      </div>
      <h3 className="h-[44px] shrink-0 pl-[11px] text-[30px] leading-[44px] font-light text-[#2b579a]">瞬态</h3>
      <div className="flex h-[38px] shrink-0 items-center pl-[18px] text-[24px] text-[#55575b]">
        <button type="button" className="flex items-center gap-[14px]">
          <Svg s="w-[18px] h-[12px]" vb="0 0 18 12"><path d="M0 0H18V4H0ZM0 8H18V12H0Z" fill={G} /></Svg>计算
        </button>
        <button type="button" className="ml-4 flex items-center gap-3">
          <Svg s="size-6" vb="0 0 24 24"><path d="M21 18A10 10 0 1 1 20 6" stroke={G} strokeWidth="1.800" /><path d="M23 1V10H14Z" fill={G} /></Svg>更新解
        </button>
      </div>
      <div className="mt-6 shrink-0 px-[10px]">
        <FieldRow label="标签:" id="f-label" lw="w-[72px]" h="h-[46px]">
          <input id="f-label" defaultValue="瞬态" className="h-10 min-w-0 flex-1 border-[3px] border-[#e7e9eb] pl-[5px] text-[24px] text-[#808285]" />
          <SideButton n="创建快捷方式"><Svg s="size-[28px]" vb="0 0 28 28"><path d="M8 26H26V3H2V18M2 8H26M8 14H20M8 18H20" stroke="#d2d4d6" strokeWidth="2" /><path d="M1 27L2 19L8 19L7 24Z" fill="#d2d4d6" /></Svg></SideButton>
        </FieldRow>
      </div>
      <SectionHead t="研究设置" cls="mt-[18px]" />
      <div className="flex shrink-0 flex-col gap-3 px-[10px] pt-[18px]">
        <FieldRow label="时间单位:" id="f-unit"><Combo id="f-unit" value="s" /></FieldRow>
        <FieldRow label="输出时步:" id="f-times" h="h-[46px]">
          <input id="f-times" defaultValue="range(0,0.001,0.3)" className="h-10 min-w-0 flex-1 border-[3px] border-[#e7e9eb] pl-[4px] text-[23px] text-[#77797c]" />
          <span className="ml-5 w-[10px] text-[24px] text-[#66686b]">s</span>
          <SideButton n="范围"><Svg s="size-[26px]" vb="0 0 26 26"><path d="M2 1V20L6 16L10 20L14 16L18 20L22 16L24 19V1M2 24H24" stroke="#d2d4d6" strokeWidth="1.800" /></Svg></SideButton>
        </FieldRow>
        <FieldRow label="容差:" id="f-tol"><Combo id="f-tol" value="物理场控制" /></FieldRow>
        <Check label="包含几何非线性" on />
      </div>
      <SectionHead t="求解时显示结果" cls="mt-[24px]" />
      <div className="shrink-0 px-[5px] pt-[19px]">
        <fieldset className="min-w-0 border-2 border-[#d4d6d9] px-4 pb-[11px]">
          <legend className="-ml-1 pr-2 pl-1"><Check label="绘制" on /></legend>
          <div className="flex flex-col gap-3 pt-[14px]">
            <FieldRow label="绘图组:" id="f-plot" h="h-[46px]">
              <Combo id="f-plot" value="速度 (mbd)" />
              <SideButton n="转到源"><Svg s="size-[28px]" vb="0 0 28 28"><path d="M2 3H13M2 9H13M6 14H13M6 19H13M2 25H14M22 8H26V25H17" stroke="#d2d4d6" strokeWidth="2" /><path d="M22 4V12L16 8Z" fill="#c4c6c8" /></Svg></SideButton>
            </FieldRow>
            <FieldRow label="更新基于:" id="f-upd"><Combo id="f-upd" value="输出中存储的时步" /></FieldRow>
          </div>
        </fieldset>
      </div>
      <div className="flex shrink-0 flex-col gap-3 px-[10px] pt-[13px]">
        <FieldRow label="探针:" id="f-probe"><Combo id="f-probe" value="全部" /></FieldRow>
        <FieldRow label="更新基于:" id="f-upd2"><Combo id="f-upd2" value="求解器采用的时步" /></FieldRow>
      </div>
      <SectionHead t="物理场和变量选择" cls="mt-[22px]">
        <button type="button" aria-label="重置"><Svg s="w-[22px] h-[18px]" vb="0 0 22 18"><path d="M3 5H16Q21 5 21 10T16 16H2" stroke="#c6ccd3" strokeWidth="1.800" /><path d="M6 0V9L0 5Z" fill="#c6ccd3" /></Svg></button>
      </SectionHead>
      <div className="shrink-0 px-[10px] pt-[19px]">
        <Check label="修改研究步骤的模型配置" />
        <table className="mt-[12px] w-full table-fixed border-collapse border-2 border-[#d9dbdd] text-left text-[24px] leading-8 text-[#66686b]">
          <colgroup><col className="w-[62px]" /><col /><col className="w-[70px]" /><col className="w-[309px]" /></colgroup>
          <thead className="bg-[#f4f5f6] text-[#b5b7ba]">
            <tr className="h-[56px] [&>th]:border-r-2 [&>th]:border-[#d4d6d9] [&>th]:font-normal [&>th]:pt-3">
              <th className="relative">
                <span className="absolute top-2 left-[8px]"><Svg s="w-[18px] h-[15px]" vb="0 0 18 15"><path d="M0 0L9 7.500L0 15ZM9 0L18 7.500L9 15Z" fill="#808285" /></Svg></span>
                <span className="sr-only">状态</span>
              </th>
              <th className="pl-[10px]">物理场接口</th>
              <th className="text-center">求解</th>
              <th className="pl-[9px]">方程形式</th>
            </tr>
          </thead>
          <tbody>
            {["多体动力学 (mbd)", "磁场，无电流 (mfnc)"].map((t) => (
              <tr key={t} className="h-[42px] border-b-2 border-[#d4d6d9] [&>td]:border-r-2 [&>td]:border-[#d4d6d9]">
                <td>
                  <span className="flex justify-center"><Svg s="size-[26px]" vb="0 0 26 26"><circle cx="13" cy="13" r="11" stroke="#d2d4d6" strokeWidth="2.500" /><circle cx="13" cy="13" r="5" fill="#c9cbcd" /></Svg></span>
                </td>
                <td className="pb-[2px] pl-[5px]">{t}</td>
                <td className="bg-white"><CellCheck n={`求解 ${t}`} /></td>
                <td className="pb-[2px] pl-[6px]">自动 (瞬态)</td>
              </tr>
            ))}
          </tbody>
        </table>
      </div>
      <div className="flex shrink-0 flex-col gap-1 pt-[23px]">
        {["因变量值", "网格选择", "自适应", "研究扩展"].map((t) => <SectionHead key={t} t={t} closed />)}
      </div>
    </Panel>
  );
}

/* ---------- graphics ---------- */

const grid3d = [
  [717, 701], [748, 732], [776, 759], [830, 812], [937, 918], [1043, 1023], [1149, 1128], [1256, 1234],
];

function Scene() {
  const upper = Array.from({ length: 12 }, (_, i) => i);
  const lower = Array.from({ length: 26 }, (_, i) => i);
  return (
    <svg className="absolute inset-0 size-full" viewBox="1550 443 974 1008" preserveAspectRatio="xMidYMid slice" fill="none" aria-label="三维图形">
      <defs>
        <linearGradient id="cyl" x1="0" x2="1" y1="0" y2="0">
          <stop offset="0" stopColor="#37bccd" /><stop offset="0.25" stopColor="#42dff0" /><stop offset="0.5" stopColor="#3dcde0" />
          <stop offset="0.51" stopColor="#3bc6d6" /><stop offset="0.8" stopColor="#33aebd" /><stop offset="0.86" stopColor="#2b8f9c" /><stop offset="1" stopColor="#2b8f9c" />
        </linearGradient>
        <linearGradient id="rod" x1="0" x2="0" y1="0" y2="1">
          <stop offset="0" stopColor="#d02a2d" /><stop offset="0.05" stopColor="#9a1d20" /><stop offset="0.22" stopColor="#a52023" />
          <stop offset="0.5" stopColor="#cf2a2c" /><stop offset="0.6" stopColor="#e02d30" /><stop offset="0.92" stopColor="#d82b2e" /><stop offset="1" stopColor="#b02225" />
        </linearGradient>
        <linearGradient id="rodend" x1="0" x2="1" y1="0" y2="0">
          <stop offset="0" stopColor="#ff2a30" /><stop offset="1" stopColor="#ff2a30" stopOpacity="0" />
        </linearGradient>
      </defs>
      <g stroke="#8f9092" strokeWidth="1.200">
        {grid3d.map(([a, b]) => <path key={a} d={`M1549 ${a}L2525 ${b}`} />)}
        <path d="M2027 709L2028 775M2031 934L2038 1268" />
      </g>
      <path d="M1948 785Q1953 779 1964 778Q1985 774 2028 774Q2080 774 2097 778Q2106 780 2110 783V865L1949 868Z" fill="url(#cyl)" stroke="#000" strokeWidth="1.800" />
      <path d="M2028 774L2030 867" stroke="#000" strokeWidth="1.800" />
      <path d="M1741 894L2319 883L2306 933L1763 940Z" fill="#942426" stroke="#000" strokeWidth="1.800" />
      <path d="M1741 871L2319 861V883L1741 894Z" fill="#cf2b2d" stroke="#000" strokeWidth="1.800" />
      <path d="M2058 911H2525V959L2058 961Z" fill="url(#rod)" />
      <path d="M2058 912H2170V917H2058Z" fill="url(#rodend)" />
      <path d="M2058 930H2200V961H2058Z" fill="url(#rodend)" opacity="0.5" />
      <g stroke="#000" strokeWidth="1.800">
        <path d="M1930 914L1549 1093M1994 910L1549 1121M1994 916L1549 1124M2058 911L1549 1152" />
      </g>
      <g stroke="#c8000a" fill="#c8000a" strokeWidth="1.200">
        {upper.map((i) => {
          const x = 2323 + i * 18.500;
          const h = 15 + i * 1.100;
          return <g key={i}><path d={`M${x} 911L${x - 6} ${911 - h}`} /><path d={`M${x - 8} ${905 - h}L${x - 8} ${914 - h}L${x - 4} ${913 - h}Z`} stroke="none" /></g>;
        })}
        {lower.map((i) => {
          const x = 2080 + i * 18.500;
          const h = 3 + i * 0.900;
          return <g key={i}><path d={`M${x} 933L${x - i * 0.250} ${933 - h}`} /><path d={`M${x - i * 0.300} ${929 - h}l-2 ${4 + i * 0.200}l4 -1Z`} stroke="none" /></g>;
        })}
      </g>
      <g fill="#000" className="font-[DejaVu_Sans,Noto_Sans_CJK_SC,sans-serif]" fontSize="24">
        <text x="1579" y="493">时间=0.293 s</text>
        <text x="1849" y="493">体: mod(dom,10)</text>
        <text x="2067" y="493">线上箭头: 速度</text>
        <text x="2031" y="624" fontSize="22">cm</text>
        <text x="2018" y="687">0</text>
        <text x="1625" y="1300" fontSize="22">z</text>
        <text x="1702" y="1374" fontSize="22">x</text>
      </g>
      <path d="M1633 1370V1325" stroke="#4a80b8" strokeWidth="3" />
      <path d="M1626 1327L1633 1310L1639 1327Z" fill="#4a80b8" />
      <ellipse cx="1631" cy="1372" rx="6" ry="6" fill="#4a9a3a" />
      <path d="M1633 1370L1676 1369" stroke="#dc1558" strokeWidth="4" />
      <path d="M1675 1362L1693 1368L1675 1375Z" fill="#dc1558" />
      <text x="1621" y="1377" fontSize="22" fill="#000" className="font-[DejaVu_Sans,sans-serif]">y</text>
    </svg>
  );
}

function Axis2({ a, b, c1, c2 }: { a: string; b: string; c1: string; c2: string }) {
  return (
    <Svg s="size-[32px] overflow-visible">
      <path d="M5 6V28" stroke={c1} strokeWidth="1.800" /><path d="M2 8L5 2L8 8Z" fill={c1} />
      <path d="M5 28H26" stroke={c2} strokeWidth="1.800" /><path d="M25 25L31 28L25 31Z" fill={c2} />
      <text x="11" y="17" fontSize="15" fill="#88898c">{a}{b}</text>
    </Svg>
  );
}

const BL = "#3c8dcb";

function GraphicsPanel() {
  const onBtn = "flex h-[39px] shrink-0 items-center justify-center rounded-[4px] border-2 border-[#1a93ef] bg-[#9fd1fa]";
  return (
    <Panel border="border-[#99cff8]">
      <TabBar pin="#388bcb">
        <Tab label="图形" active color="text-[#1a90ee]" />
        <Tab label="收敛图 2" close />
        <Tab label="收敛图 1" close />
      </TabBar>
      <div className="flex h-[52px] shrink-0 items-center pt-3 pl-[6px]">
        <ToolCell n="放大"><Svg s="size-[26px]" vb="0 0 26 26"><circle cx="10" cy="10" r="8" stroke={BL} strokeWidth="1.800" /><path d="M16 16L24 24" stroke={BL} strokeWidth="3" /><path d="M6 10H14M10 6V14" stroke={BL} strokeWidth="1.800" /></Svg></ToolCell>
        <ToolCell n="缩小"><Svg s="size-[26px]" vb="0 0 26 26"><circle cx="10" cy="10" r="8" stroke={BL} strokeWidth="1.800" /><path d="M16 16L24 24" stroke={BL} strokeWidth="3" /><path d="M6 10H14" stroke={BL} strokeWidth="1.800" /></Svg></ToolCell>
        <ToolCell n="框选缩放"><Svg s="size-[30px]"><path d="M2 14H18V29H2Z" stroke={BL} strokeWidth="1.800" strokeDasharray="4 3" /><circle cx="17" cy="12" r="8" stroke={BL} strokeWidth="1.800" /><path d="M23 18L30 27" stroke={BL} strokeWidth="3" /><path d="M13 12H21M17 8V16" stroke={BL} strokeWidth="1.800" /></Svg></ToolCell>
        <ToolCell n="缩放选项" w="w-6"><Caret /></ToolCell>
        <ToolCell n="缩放到窗口大小" w="ml-[11px] w-11"><Svg s="size-[34px]"><path d="M1 1H31V31H1ZM16 7V25M7 16H25" stroke="#77797c" strokeWidth="1.500" /><path d="M13 6L16 2L19 6ZM13 26L16 30L19 26ZM6 13L2 16L6 19ZM26 13L30 16L26 19Z" fill={BL} /></Svg></ToolCell>
        <div className="mr-[6px] ml-2 h-8 w-[2px] shrink-0 bg-[#d6d8db]" />
        <ToolCell n="默认视图"><Svg s="size-[32px]"><path d="M15 5V26" stroke={BL} strokeWidth="1.800" /><path d="M12 8L15 2L18 8Z" fill={BL} /><path d="M15 26L4 16" stroke="#56b04a" strokeWidth="1.800" /><path d="M2 13L9 16L4 20Z" fill="#56b04a" /><path d="M15 26L29 16" stroke="#dc1558" strokeWidth="1.800" /><path d="M32 13L25 15L29 20Z" fill="#dc1558" /></Svg></ToolCell>
        <ToolCell n="视图选项" w="w-6"><Caret /></ToolCell>
        <ToolCell n="XY 视图" w="ml-3 w-11"><Axis2 a="x" b="y" c1="#56b04a" c2="#dc1558" /></ToolCell>
        <ToolCell n="YZ 视图"><Axis2 a="y" b="z" c1={BL} c2="#56b04a" /></ToolCell>
        <ToolCell n="XZ 视图"><Axis2 a="x" b="z" c1={BL} c2="#dc1558" /></ToolCell>
        <ToolCell n="镜头"><Svg s="size-[28px]" vb="0 0 28 28"><path d="M2 2H8Q11 3 11 8V26H2Z" fill="#a0a2a4" /><path d="M13 11H18V17H13ZM18 9L22 6V22L18 19Z" fill="#b4b6b8" stroke={G} /><rect x="22" y="6" width="5" height="16" fill="#d0d1d3" stroke={G} /></Svg></ToolCell>
        <div className="mr-[6px] ml-2 h-8 w-[2px] shrink-0 bg-[#d6d8db]" />
        <ToolCell n="旋转"><Svg s="size-[28px]" vb="0 0 28 28"><path d="M17 6A10 10 0 1 0 23 15" stroke={BL} strokeWidth="2" /><path d="M14 0L23 6L14 12Z" fill={BL} /></Svg></ToolCell>
        <ToolCell n="旋转选项" w="w-6"><Caret /></ToolCell>
        <div className="mr-[6px] ml-[18px] h-8 w-[2px] shrink-0 bg-[#d6d8db]" />
        <ToolCell n="裁剪"><Svg s="size-[30px]" vb="0 0 30 30"><path d="M2 5L12 2V24L2 27ZM12 2L22 6V28L12 24M2 10H22M2 17H20" stroke={G} strokeWidth="1.500" /><path d="M13 9H28V26L20 29L13 25Z" fill="#d0d1d3" stroke={G} strokeWidth="1.500" /></Svg></ToolCell>
        <ToolCell n="裁剪选项" w="w-6"><Caret color="#66686b" /></ToolCell>
        <div className="mr-[9px] ml-[18px] h-8 w-[2px] shrink-0 bg-[#d6d8db]" />
        <button type="button" aria-label="场景光" className={`${onBtn} w-[74px] gap-[8px] pr-[2px]`}>
          <Svg s="w-[24px] h-[24px]" vb="0 0 26 24"><path d="M0 8H7L18 1V23L7 16H0Z" fill={BL} /><path d="M20 4Q25 12 20 20Z" fill="#fff" stroke={BL} strokeWidth="1.500" /></Svg>
          <span className="h-[32px] w-[2px] bg-[#1a93ef]" />
          <Caret />
        </button>
        <ToolCell n="透明度" w="ml-1 w-11"><Svg s="size-[28px]" vb="0 0 28 28"><path d="M1 3H21V20H1Z" stroke="#7aa3cd" strokeWidth="1.500" fill="#dbe6f3" /><path d="M7 8H27V26H7ZM1 3L7 8M21 3L27 8M1 20L7 26M21 20L27 26" stroke="#5b87b8" strokeWidth="1.500" /></Svg></ToolCell>
        <ToolCell n="透明度选项" w="w-6"><Caret /></ToolCell>
        <button type="button" aria-label="显示坐标轴" className={`${onBtn} ml-[14px] w-[39px]`}>
          <Svg s="size-[28px]" vb="0 0 28 28"><path d="M2 2H26V26H2Z" stroke="#77797c" strokeWidth="1.500" /><path d="M14 20V9" stroke={BL} strokeWidth="1.500" /><path d="M11.500 10L14 6L16.500 10Z" fill={BL} /><path d="M14 20L8 15" stroke="#56b04a" strokeWidth="1.500" /><path d="M6 12L11 14L7 18Z" fill="#56b04a" /><path d="M14 20L20 15" stroke="#dc1558" strokeWidth="1.500" /><path d="M22 12L17 14L21 18Z" fill="#dc1558" /></Svg>
        </button>
        <button type="button" aria-label="显示栅格" className={`${onBtn} ml-[5px] w-[39px]`}>
          <Svg s="size-[28px]" vb="0 0 28 28"><path d="M2 2H26V26H2Z" stroke="#77797c" strokeWidth="1.500" /><path d="M6 6H22V22H6ZM11.500 6V22M16.500 6V22M6 11.500H22M6 16.500H22" fill="#d5eafc" stroke={BL} strokeWidth="1.200" /></Svg>
        </button>
      </div>
      <div className="mb-2 flex h-[38px] shrink-0 items-center pl-[6px]">
        <ToolCell n="图像"><Svg s="size-[28px]" vb="0 0 28 28"><circle cx="14" cy="14" r="9.500" stroke="#a0a2a4" strokeWidth="6" /><path d="M14 1L9 11M26 9L15 9M26 20L19 10M14 27L19 17M2 19L13 19M2 8L9 18" stroke="#fafbff" strokeWidth="2" /></Svg></ToolCell>
        <ToolCell n="图像选项" w="w-[26px]"><Caret color="#55575b" /></ToolCell>
        <ToolCell n="图像快照" w="ml-[9px] w-11"><Svg s="w-[26px] h-[20px]" vb="0 0 26 20"><path d="M0 3H6L8 0H18L20 3H26V20H0Z" fill={G} /><circle cx="13" cy="11" r="5.500" stroke="#fafbff" strokeWidth="2" /></Svg></ToolCell>
        <ToolCell n="打印" w="w-11"><Svg s="size-[28px]" vb="0 0 28 28"><path d="M6 1H22V10H6Z" fill="#fff" stroke={G} strokeWidth="1.500" /><path d="M2 8H26V20H2Z" fill="#d0d1d3" stroke={G} strokeWidth="1.500" /><path d="M6 16H22V27H6Z" fill="#fff" stroke={G} strokeWidth="1.500" /></Svg></ToolCell>
      </div>
      <div className="relative min-h-0 flex-1 overflow-hidden border-[3px] border-dotted border-black bg-linear-to-b from-[#fbfcff] to-[#e3f0fe]">
        <Scene />
        <div className="absolute top-[6px] right-[10px]"><Logo s="w-[36px] h-[44px]" /></div>
      </div>
    </Panel>
  );
}

/* ---------- add physics ---------- */

const physicsRows: Row[] = [
  { l: 0, a: "o", i: "recent", t: "最近使用" },
  { l: 1, i: "solid", t: "固体力学 (solid)" },
  { l: 1, i: "mag", t: "磁场，无电流 (mfnc)" },
  { l: 1, i: "flow", t: "层流 (spf)" },
  { l: 1, i: "magmech", t: "磁力学，无电流" },
  { l: 0, a: "c", i: "acdc", t: "AC/DC" },
  { l: 0, a: "c", i: "acoustic", t: "声学" },
  { l: 0, a: "c", i: "chem", t: "化学物质传递" },
  { l: 0, a: "c", i: "electro", t: "电化学" },
  { l: 0, a: "c", i: "flow", t: "流体流动" },
  { l: 0, a: "c", i: "heat", t: "传热" },
  { l: 0, a: "c", i: "optics", t: "光学" },
  { l: 0, a: "c", i: "plasma", t: "等离子体" },
  { l: 0, a: "c", i: "rf", t: "射频" },
  { l: 0, a: "c", i: "semi", t: "半导体" },
  { l: 0, a: "c", i: "solid", t: "结构力学" },
  { l: 0, a: "c", i: "math", t: "数学" },
];

function Plus() {
  return <Svg s="size-[20px]" vb="0 0 20 20"><path d="M0 10H20M10 0V20" stroke="#a0a2a4" strokeWidth="1.500" /></Svg>;
}

function PhysicsPanel() {
  return (
    <Panel>
      <TabBar>
        <Tab label="添加物理场" active close />
        <Tab label="添加材料" close />
      </TabBar>
      <div className="flex h-[58px] shrink-0 items-center gap-[19px] pb-[6px] pl-[18px] pt-[14px] text-[24px] leading-8 text-[#66686b]">
        <button type="button" className="flex items-center gap-3 whitespace-nowrap"><Plus />添加到“组件 1”</button>
        <button type="button" className="flex items-center gap-3 whitespace-nowrap"><Plus />添加到选择</button>
      </div>
      <div className="mb-2 flex min-h-0 flex-1">
        <div className="flex min-w-0 flex-1 flex-col">
          <div className="mt-[16px] flex h-[42px] shrink-0 items-center gap-[15px] pr-[5px] pl-[7px]">
            <input aria-label="搜索物理场" className="h-10 min-w-0 flex-1 border-[3px] border-[#e7e9eb] px-2 text-[24px]" />
            <button type="button" className="h-[42px] w-[120px] shrink-0 rounded-[5px] border-[3px] border-[#e7e9eb] bg-[#f4f5f7] text-[24px] leading-[36px] text-[#9a9ca0]">搜索</button>
          </div>
          <ul className="mt-[10px] mr-[4px] ml-[7px] flex min-h-0 flex-1 flex-col overflow-hidden border-y-2 border-l-2 border-[#e4e6e9] bg-[#fcfdff] pt-px">
            {physicsRows.map((r, i) => <TreeRow key={i} r={r} pads={indentPhysics} aw="w-[38px]" />)}
          </ul>
          <div className="mt-[14px] flex h-8 shrink-0 items-center gap-2 pr-[9px] pl-[9px] text-[24px] leading-8 whitespace-nowrap text-[#77797c]">
            <span className="h-[2px] w-[18px] bg-[#dcdee0]" />研究中的物理场接口<span className="h-[2px] flex-1 bg-[#dcdee0]" />
          </div>
          <div className="mt-[9px] mb-[17px] shrink-0 pr-[8px] pl-[8px]">
            <table className="w-full table-fixed border-collapse border-2 border-[#d9dbdd] text-left text-[24px] leading-8 text-[#808285]">
              <colgroup><col /><col className="w-[72px]" /></colgroup>
              <thead className="bg-[#f4f5f6] text-[#b5b7ba]">
                <tr className="h-[56px] [&>th]:border-r-2 [&>th]:border-[#d4d6d9] [&>th]:pt-3 [&>th]:font-normal"><th className="pl-[10px]">研究</th><th className="text-center">求解</th></tr>
              </thead>
              <tbody>
                <tr className="h-[41px] [&>td]:border-r-2 [&>td]:border-[#d4d6d9]"><td className="pl-[6px]">研究 1</td><td className="bg-white"><CellCheck n="求解研究 1" /></td></tr>
              </tbody>
            </table>
          </div>
          <div className="h-[4px] shrink-0 bg-[#eaf2f9]" />
        </div>
        <div className="flex w-[34px] shrink-0 flex-col bg-[#fdfeff]">
          <div className="flex h-[34px] items-center justify-center bg-[#f5f6f8]"><Chevron up /></div>
          <div className="min-h-0 flex-1 bg-[#e3e4e6]" />
          <div className="mt-[46px] flex h-[34px] items-center justify-center bg-[#f5f6f8]"><Chevron /></div>
        </div>
      </div>
    </Panel>
  );
}

/* ---------- messages ---------- */

const messages = [
  { time: "[2023年11月23日 上午11:51]", text: "求解的自由度数", value: "11441。" },
  { time: "[2023年11月23日 上午11:52]", text: "求解的自由度数", value: "11441。" },
  { time: "[2023年11月23日 上午11:54]", text: "求解的自由度数", value: "11441。" },
  { time: "[2023年11月23日 上午11:54]", text: "求解时间 (研究 1): 10 s。" },
  { time: "[2023年11月23日 上午11:56]", text: "求解的自由度数", value: "11434。" },
];

function MessagesPanel() {
  return (
    <Panel>
      <TabBar>
        <Tab label="消息" active close />
        <Tab label="进度" />
        <Tab label="日志" />
        <Tab label="Evaluation 3D" close />
      </TabBar>
      <div className="flex h-[57px] shrink-0 items-end pb-[4px] pl-[7px]">
        <button type="button" aria-label="清除消息" className="flex h-10 w-11 items-center justify-center">
          <Svg s="w-[22px] h-[32px]" vb="0 0 22 32"><path d="M1 1L8 17" stroke="#b0b2b4" strokeWidth="2.500" /><path d="M6 17L10 14L21 26L16 32L8 29Z" fill="#dedfe1" stroke="#b0b2b4" strokeWidth="1" /></Svg>
        </button>
        <button type="button" aria-label="自动打开" className="flex size-10 items-center justify-center rounded-[5px] border-2 border-[#1a93ef] bg-[#9fd1fa]">
          <Svg s="size-[32px]"><path d="M2 5H26V22H2Z" fill="#eaf4fd" stroke={BL} strokeWidth="1.500" /><path d="M2 5H26V8H2Z" fill="#a9cdea" stroke={BL} /><path d="M11 13H31V27H11ZM11 13L21 22L31 13M11 27L18 20M31 27L24 20" fill="#fff" stroke={BL} strokeWidth="1.500" /></Svg>
        </button>
      </div>
      <div className="mx-[7px] mb-2 flex min-h-0 flex-1 overflow-hidden border-2 border-[#d4d6d9]">
        <ul className="min-w-0 flex-1 overflow-hidden pt-[2px] pl-[5px] text-[24px] leading-8 whitespace-nowrap text-black">
          {messages.map((m, i) => (
            <li key={i} className="h-8">
              {m.time} {m.text}
              {m.value && <><span className="font-['Noto_Sans_CJK_JP',sans-serif]" lang="ja">：</span>{m.value}</>}
            </li>
          ))}
        </ul>
        <div className="flex w-[34px] shrink-0 flex-col bg-[#fdfeff]">
          <div className="flex h-[34px] items-center justify-center bg-[#f5f6f8]"><Chevron up color="#cdcfd1" /></div>
          <div className="flex-1" />
          <div className="h-[22px] bg-[#e3e4e6]" />
          <div className="mt-[4px] flex h-[34px] items-center justify-center bg-[#f5f6f8]"><Chevron color="#cdcfd1" /></div>
        </div>
      </div>
    </Panel>
  );
}

function StatusBar() {
  const progress = 96;
  return (
    <footer className="flex h-[61px] shrink-0 items-center justify-between pt-[20px] pr-[12px] pl-[1714px]">
      <span className="text-[23px] leading-[38px] text-black">2.03 GB | 2.29 GB</span>
      <div className="flex items-center">
        <button type="button" aria-label="停止"><Svg s="size-[24px]" vb="0 0 24 24"><circle cx="12" cy="12" r="11" stroke={BL} strokeWidth="1.500" /><path d="M7 7L17 17M17 7L7 17" stroke={BL} strokeWidth="1.500" /></Svg></button>
        <div role="progressbar" aria-valuenow={progress} aria-label="进度" className="ml-[18px] h-[30px] w-[400px] border-2 border-[#bcbcbc] border-l-0 bg-[#e6e6e6]">
          <div className="-my-[2px] h-[30px] bg-[#06b025]" style={{ width: `${progress}%` }} />
        </div>
        <span className="ml-[14px]"><Svg s="w-[32px] h-[12px]" vb="0 0 32 12"><rect x="1" y="1" width="30" height="10" rx="2" fill="#dfe6ec" stroke="#6aa5d4" strokeWidth="2" /><path d="M3 3H18V9H3Z" fill="#8cc87c" /></Svg></span>
      </div>
    </footer>
  );
}

export default function App() {
  return (
    <div className="flex h-screen flex-col overflow-hidden bg-[#fafbff] font-['Open_Sans','Noto_Sans_CJK_SC',sans-serif]">
      <TitleBar />
      <Menu />
      <div className="shrink-0"><Ribbon /></div>
      <main className="mt-[9px] grid min-h-0 flex-1 grid-cols-[669fr_850fr_1518fr] grid-rows-[minmax(0,1fr)] gap-[11px] pr-[7px] pl-[6px]">
        <ModelPanel />
        <SettingsPanel />
        <div className="grid min-h-0 min-w-0 grid-rows-[minmax(0,1fr)_294px] gap-[11px]">
          <div className="grid min-h-0 min-w-0 grid-cols-[980fr_526fr] grid-rows-[minmax(0,1fr)] gap-3">
            <GraphicsPanel />
            <PhysicsPanel />
          </div>
          <MessagesPanel />
        </div>
      </main>
      <StatusBar />
    </div>
  );
}
